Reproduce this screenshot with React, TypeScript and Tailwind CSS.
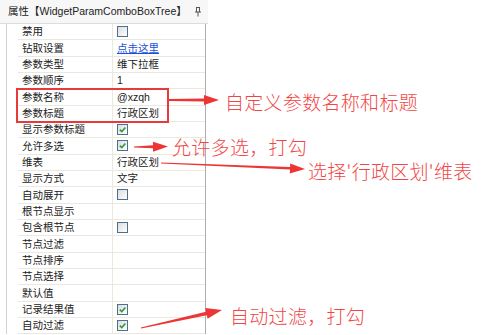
import React from "react";

type Row = { label: string; value?: string; kind?: "check" | "checked" | "link" };

const rows: Row[] = [
  { label: "禁用", kind: "check" },
  { label: "钻取设置", value: "点击这里", kind: "link" },
  { label: "参数类型", value: "维下拉框" },
  { label: "参数顺序", value: "1" },
  { label: "参数名称", value: "@xzqh" },
  { label: "参数标题", value: "行政区划" },
  { label: "显示参数标题", kind: "checked" },
  { label: "允许多选", kind: "checked" },
  { label: "维表", value: "行政区划" },
  { label: "显示方式", value: "文字" },
  { label: "自动展开", kind: "check" },
  { label: "根节点显示" },
  { label: "包含根节点", kind: "check" },
  { label: "节点过滤" },
  { label: "节点排序" },
  { label: "节点选择" },
  { label: "默认值" },
  { label: "记录结果值", kind: "checked" },
  { label: "自动过滤", kind: "checked" },
];

function CheckBox({ checked }: { checked?: boolean }) {
  return (
    <span className="relative inline-block w-[11px] h-[11px] border border-[#4f6f8f] bg-gradient-to-br from-[#dcdcdc] to-[#ffffff]">
      {checked && (
        <svg viewBox="0 0 9 9" className="absolute inset-0 w-[9px] h-[9px]">
          <path d="M1.8 4.6 L3.8 6.6 L7.4 2.4" fill="none" stroke="#2f9a3a" strokeWidth="1.6" />
        </svg>
      )}
    </span>
  );
}

// tail-thin, head-wide arrow as used by screenshot annotation tools
function arrow(x1: number, y1: number, x2: number, y2: number, w0: number, w1: number, len: number, half: number) {
  const dx = x2 - x1;
  const dy = y2 - y1;
  const d = Math.hypot(dx, dy);
  const ux = dx / d;
  const uy = dy / d;
  const nx = -uy;
  const ny = ux;
  const bx = x2 - ux * len;
  const by = y2 - uy * len;
  const pts = [
    [x1 + nx * w0 / 2, y1 + ny * w0 / 2],
    [bx + nx * w1 / 2, by + ny * w1 / 2],
    [bx + nx * half, by + ny * half],
    [x2, y2],
    [bx - nx * half, by - ny * half],
    [bx - nx * w1 / 2, by - ny * w1 / 2],
    [x1 - nx * w0 / 2, y1 - ny * w0 / 2],
  ];
  return pts.map((p) => p[0].toFixed(1) + "," + p[1].toFixed(1)).join(" ");
}

export default function App() {
  const font = { fontFamily: '"Liberation Sans", "Noto Sans CJK SC", sans-serif' };
  const note = { fontFamily: '"Noto Sans CJK SC", sans-serif' };

  return (
    <div className="relative w-[501px] h-[335px] bg-white overflow-hidden text-[#222]" style={font}>
      <div className="w-[208px]">
        <div className="h-[24px] flex items-center justify-between pl-[8px] pr-[6px] bg-[#f7f7f7] border-b border-[#dcdcdc]">
          <span className="text-[10.5px] leading-none">属性【WidgetParamComboBoxTree】</span>
          <svg viewBox="0 0 8 10" className="w-[8px] h-[10px]">
            <path d="M2 0.5 H6 M2.5 0.5 V5 M5.5 0.5 V5 M1 5 H7 M4 5 V9.5" fill="none" stroke="#555" strokeWidth="1" />
          </svg>
        </div>
        <div className="flex ml-[6px] w-[200px] border-l border-[#d2d2d2] border-r border-r-[#aeaeae]">
          <div className="w-[11px] shrink-0" />
          <div className="flex-1">
            {rows.map((r) => (
              <div key={r.label} className="grid grid-cols-[95px_1fr] h-[16.33px] border-b border-[#ebe8de] text-[10.5px] leading-none">
                <div className="flex items-center pl-[4px] border-r border-[#ebe8de]">{r.label}</div>
                <div className="flex items-center pl-[4px]">
                  {r.kind === "check" && <CheckBox />}
                  {r.kind === "checked" && <CheckBox checked />}
                  {r.kind === "link" && <span className="text-[#1d4fd8] underline">{r.value}</span>}
                  {!r.kind && r.value}
                </div>
              </div>
            ))}
          </div>
        </div>
      </div>

      {/* annotations */}
      <div className="absolute left-[16px] top-[88px] w-[153px] h-[35px] border-2 border-[#e83a3a]" />
      <svg className="absolute inset-0 pointer-events-none" width="501" height="335">
        <polygon points={arrow(169, 100, 219, 100, 2, 3, 15, 5)} fill="#ee3535" />
        <polygon points={arrow(134, 147, 168, 146.5, 1, 3, 15, 5)} fill="#ee3535" />
        <polygon points={arrow(161, 163, 305, 169, 1, 2.5, 15, 5)} fill="#ee3535" />
        <polygon points={arrow(141, 328, 222, 310, 1, 3.5, 16, 5.5)} fill="#ee3535" />
      </svg>
      <div className="absolute left-[225px] top-[92px] text-[19px] leading-none font-light tracking-[0.3px] text-[#f24646]" style={note}>自定义参数名称和标题</div>
      <div className="absolute left-[172px] top-[137px] text-[19px] leading-none font-light tracking-[0.3px] text-[#f24646]" style={note}>允许多选，打勾</div>
      <div className="absolute left-[308px] top-[161px] text-[19px] leading-none font-light tracking-[0.3px] text-[#f24646]" style={note}>选择'行政区划'维表</div>
      <div className="absolute left-[230px] top-[306px] text-[19px] leading-none font-light tracking-[0.3px] text-[#f24646]" style={note}>自动过滤，打勾</div>
    </div>
  );
}
